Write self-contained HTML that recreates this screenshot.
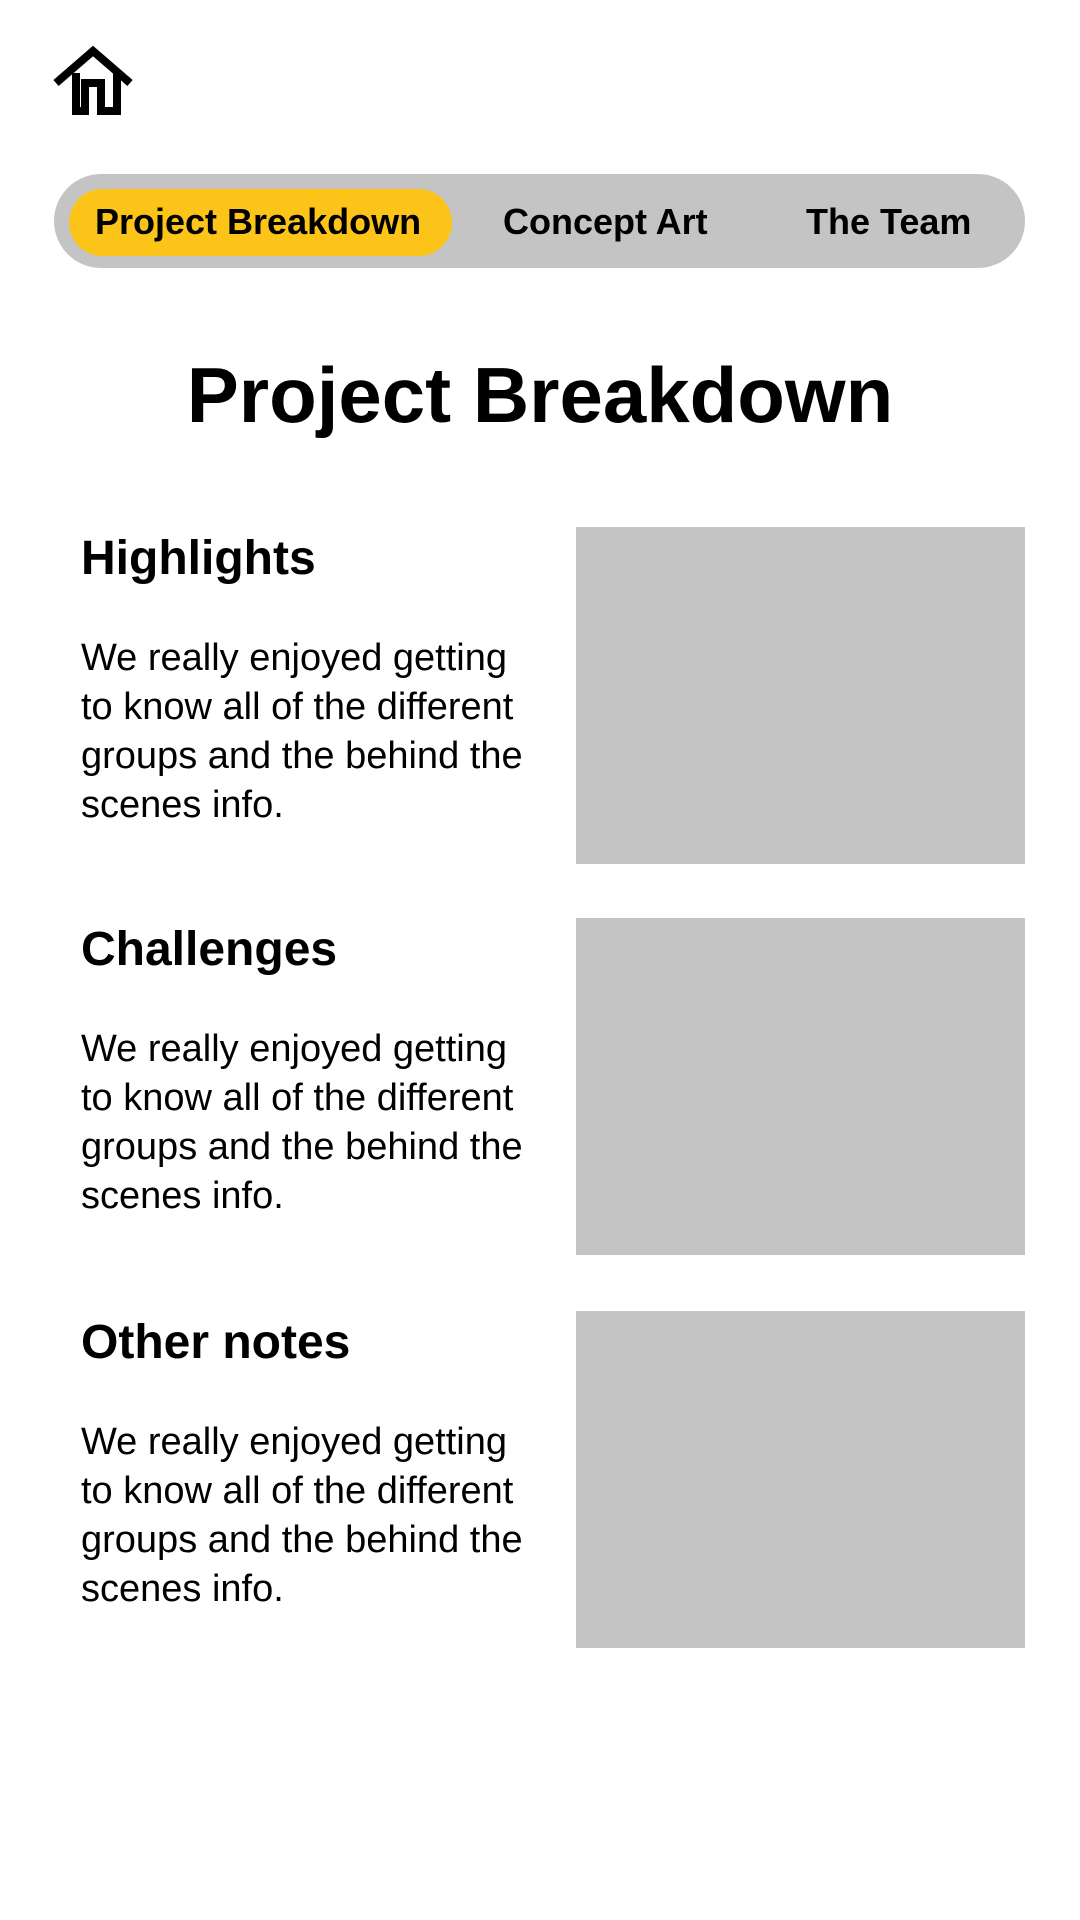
<!DOCTYPE html>
<html><head><meta charset="utf-8"><style>
html,body{margin:0;padding:0;background:#fff;}
body{width:1080px;height:1920px;position:relative;overflow:hidden;font-family:"Liberation Sans",sans-serif;color:#000;}
.a{position:absolute;white-space:nowrap;line-height:1;}
.pill{position:absolute;left:54px;top:174px;width:971px;height:94px;border-radius:47px;background:#c4c4c4;}
.yel{position:absolute;left:69px;top:189px;width:383px;height:67px;border-radius:34px;background:#fcc419;}
.nav{font-weight:bold;font-size:36px;top:204px;}
.box{position:absolute;left:576px;width:449px;height:337px;background:#c4c4c4;}
.h{font-weight:bold;font-size:48px;left:81px;}
.p{font-size:38px;line-height:49px;left:81px;}
</style></head><body>
<svg style="position:absolute;left:0;top:0" width="140" height="130" viewBox="0 0 140 130">
<path d="M56,83 L93,51 L130,83" fill="none" stroke="#000" stroke-width="8" stroke-linejoin="miter"/>
<path d="M76,73 V111 H85 V83 H101 V111 H117 V73" fill="none" stroke="#000" stroke-width="8" stroke-linejoin="miter"/>
</svg>
<div class="pill"></div>
<div class="yel"></div>
<div class="a nav" style="left:95px">Project Breakdown</div>
<div class="a nav" style="left:503px">Concept Art</div>
<div class="a nav" style="left:806px">The Team</div>
<div class="a" style="left:0;width:1080px;text-align:center;top:356px;font-size:78px;font-weight:bold">Project Breakdown</div>

<div class="box" style="top:527px"></div>
<div class="a h" style="top:535px">Highlights</div>
<div class="a p" style="top:634px">We really enjoyed getting<br>to know all of the different<br>groups and the behind the<br>scenes info.</div>

<div class="box" style="top:918px"></div>
<div class="a h" style="top:926px">Challenges</div>
<div class="a p" style="top:1025px">We really enjoyed getting<br>to know all of the different<br>groups and the behind the<br>scenes info.</div>

<div class="box" style="top:1311px"></div>
<div class="a h" style="top:1319px">Other notes</div>
<div class="a p" style="top:1418px">We really enjoyed getting<br>to know all of the different<br>groups and the behind the<br>scenes info.</div>
</body></html>
